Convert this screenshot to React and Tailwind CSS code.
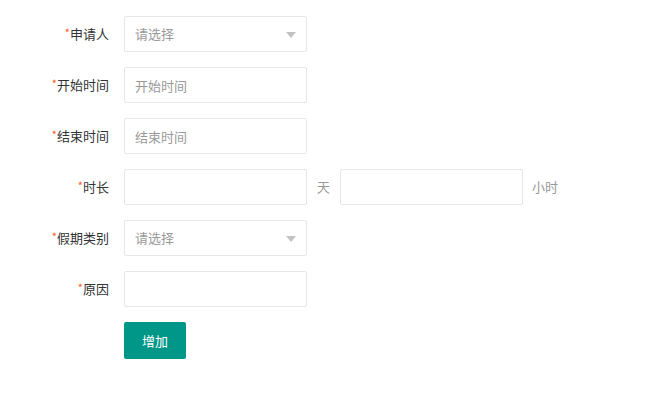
import React from "react";

const font = { fontFamily: '"Noto Sans CJK SC", "Noto Sans", sans-serif' };

function Label({ text }) {
  return (
    <div className="w-[124px] shrink-0 pr-[15px] flex items-center justify-end h-[36px] text-[13px] text-[#333]">
      <span className="text-[#ff5722] text-[11px] leading-none relative -top-[2px]">*</span>
      <span>{text}</span>
    </div>
  );
}

function Input({ placeholder }) {
  return (
    <input
      className="w-[183px] h-[36px] border border-[#e6e6e6] rounded-[2px] bg-white px-[10px] text-[13px] text-[#333] placeholder:text-[#999] outline-none"
      placeholder={placeholder}
      style={font}
    />
  );
}

function Select() {
  return (
    <div className="relative w-[183px] h-[36px] border border-[#e6e6e6] rounded-[2px] bg-white px-[10px] flex items-center text-[13px] text-[#999]">
      <span>请选择</span>
      <span className="absolute right-[10px] top-[15px] w-0 h-0 border-l-[5px] border-r-[5px] border-t-[6px] border-l-transparent border-r-transparent border-t-[#c2c2c2]" />
    </div>
  );
}

export default function App() {
  return (
    <div className="w-[651px] h-[413px] bg-white pt-[16px]" style={font}>
      <div className="flex flex-col gap-[15px]">
        <div className="flex items-center">
          <Label text="申请人" />
          <Select />
        </div>
        <div className="flex items-center">
          <Label text="开始时间" />
          <Input placeholder="开始时间" />
        </div>
        <div className="flex items-center">
          <Label text="结束时间" />
          <Input placeholder="结束时间" />
        </div>
        <div className="flex items-center">
          <Label text="时长" />
          <Input placeholder="" />
          <span className="text-[13px] text-[#999] mx-[10px]">天</span>
          <Input placeholder="" />
          <span className="text-[13px] text-[#999] ml-[9px]">小时</span>
        </div>
        <div className="flex items-center">
          <Label text="假期类别" />
          <Select />
        </div>
        <div className="flex items-center">
          <Label text="原因" />
          <Input placeholder="" />
        </div>
        <div className="flex items-center">
          <div className="w-[124px] shrink-0" />
          <button className="w-[62px] h-[37px] bg-[#009688] text-white text-[13px] rounded-[2px]" style={font}>
            增加
          </button>
        </div>
      </div>
    </div>
  );
}
